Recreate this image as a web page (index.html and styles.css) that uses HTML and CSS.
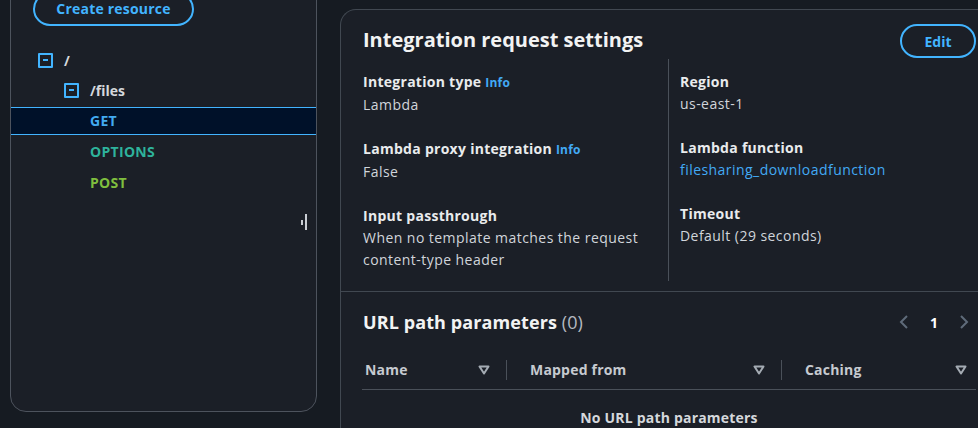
FILE: index.html
```html
<!DOCTYPE html>
<html>
<head>
<meta charset="utf-8">
<link rel="stylesheet" href="styles.css">
</head>
<body>
<div class="layout">
  <aside class="tree-panel">
    <div class="tree-actions">
      <button class="btn btn-pill create">Create resource</button>
    </div>
    <ul class="tree">
      <li class="tree-row lvl0"><span class="toggle"></span><span class="path">/</span></li>
      <li class="tree-row lvl1"><span class="toggle"></span><span class="path">/files</span></li>
      <li class="tree-row lvl2 selected"><span class="method get">GET</span></li>
      <li class="tree-row lvl2"><span class="method options">OPTIONS</span></li>
      <li class="tree-row lvl2"><span class="method post">POST</span></li>
    </ul>
    <div class="resizer"><span class="r-short"></span><span class="r-long"></span></div>
  </aside>

  <main class="detail-panel">
    <header class="panel-header">
      <h2>Integration request settings</h2>
      <button class="btn btn-pill edit">Edit</button>
    </header>
    <div class="kv-grid">
      <div class="kv-col">
        <div class="kv">
          <div class="kv-label">Integration type <a class="info">Info</a></div>
          <div class="kv-value">Lambda</div>
        </div>
        <div class="kv">
          <div class="kv-label">Lambda proxy integration <a class="info">Info</a></div>
          <div class="kv-value">False</div>
        </div>
        <div class="kv">
          <div class="kv-label">Input passthrough</div>
          <div class="kv-value">When no template matches the request content-type header</div>
        </div>
      </div>
      <div class="kv-col divided">
        <div class="kv">
          <div class="kv-label">Region</div>
          <div class="kv-value">us-east-1</div>
        </div>
        <div class="kv">
          <div class="kv-label">Lambda function</div>
          <div class="kv-value"><a class="link">filesharing_downloadfunction</a></div>
        </div>
        <div class="kv">
          <div class="kv-label">Timeout</div>
          <div class="kv-value">Default (29 seconds)</div>
        </div>
      </div>
    </div>

    <section class="params">
      <div class="params-header">
        <h3>URL path parameters <span class="count">(0)</span></h3>
        <nav class="pager">
          <svg class="chev" width="10" height="16" viewBox="0 0 10 16"><path d="M8 2 L2 8 L8 14" fill="none" stroke="currentColor" stroke-width="2"/></svg>
          <span class="page">1</span>
          <svg class="chev" width="10" height="16" viewBox="0 0 10 16"><path d="M2 2 L8 8 L2 14" fill="none" stroke="currentColor" stroke-width="2"/></svg>
        </nav>
      </div>
      <div class="table">
        <div class="thead">
          <div class="th c1"><span>Name</span><svg class="caret" width="12" height="10" viewBox="0 0 12 10"><path d="M1.5 1.5 H10.5 L6 8.5 Z" fill="none" stroke="currentColor" stroke-width="2" stroke-linejoin="round"/></svg></div>
          <div class="th c2"><span>Mapped from</span><svg class="caret" width="12" height="10" viewBox="0 0 12 10"><path d="M1.5 1.5 H10.5 L6 8.5 Z" fill="none" stroke="currentColor" stroke-width="2" stroke-linejoin="round"/></svg></div>
          <div class="th c3"><span>Caching</span><svg class="caret" width="12" height="10" viewBox="0 0 12 10"><path d="M1.5 1.5 H10.5 L6 8.5 Z" fill="none" stroke="currentColor" stroke-width="2" stroke-linejoin="round"/></svg></div>
        </div>
        <div class="empty">No URL path parameters</div>
      </div>
    </section>
  </main>
</div>
</body>
</html>
```
FILE: styles.css
```css
* { box-sizing: border-box; }
html, body {
  margin: 0;
  padding: 0;
  width: 978px;
  height: 428px;
  overflow: hidden;
  background: #161b22;
  font-family: "Open Sans", "Noto Sans", sans-serif;
  font-size: 14px;
  color: #d1d5db;
}
.layout {
  display: flex;
  align-items: flex-start;
  padding-left: 10px;
  gap: 23px;
}
.tree-panel {
  position: relative;
  width: 307px;
  height: 433px;
  margin-top: -21px;
  background: #1b1f27;
  border: 1px solid #4d535d;
  border-radius: 0 0 16px 16px;
  flex-shrink: 0;
}
.tree-actions {
  padding: 12px 0 0 22px;
}
.btn {
  font-family: inherit;
  font-weight: 700;
  font-size: 14px;
  color: #42b4ff;
  background: transparent;
  border: 2px solid #42b4ff;
  cursor: pointer;
}
.btn-pill { border-radius: 20px; }
.create {
  width: 161px;
  height: 34px;
  padding: 0;
  line-height: 28px;
  letter-spacing: 0.2px;
}
.tree {
  list-style: none;
  margin: 19px 0 0;
  padding: 0;
}
.tree-row {
  display: flex;
  align-items: center;
  height: 30px;
  font-weight: 700;
  font-size: 14px;
  color: #d5d8dc;
}
.tree-row:last-child { height: 31px; padding-top: 1px; }
.lvl0 { padding-left: 27px; }
.lvl1 { padding-left: 53px; }
.lvl2 { padding-left: 79px; }
.toggle {
  position: relative;
  width: 15px;
  height: 15px;
  border: 2px solid #42b4ff;
  border-radius: 1px;
  margin-right: 11px;
  flex-shrink: 0;
}
.toggle::after {
  content: "";
  position: absolute;
  left: 3px;
  right: 3px;
  top: 4.5px;
  height: 2px;
  background: #42b4ff;
}
.tree-row.selected {
  height: 28px;
  margin: 2px 0 1px;
  padding-bottom: 1px;
  background: #001129;
  border-top: 1px solid #42b4ff;
  border-bottom: 1px solid #42b4ff;
}
.method { letter-spacing: 0.3px; }
.get { color: #42aaf0; }
.options { color: #2eb39c; }
.post { color: #7fbe3e; }
.resizer {
  position: absolute;
  right: 9px;
  top: 234px;
  display: flex;
  align-items: center;
  gap: 2px;
}
.r-short { width: 2px; height: 5px; background: #c9cdd3; }
.r-long { width: 2px; height: 16px; background: #c9cdd3; }

.detail-panel {
  width: 660px;
  height: 440px;
  margin-top: 9px;
  background: #1b1f27;
  border: 1px solid #414851;
  border-right: none;
  border-bottom: none;
  border-radius: 16px 0 0 0;
  flex-shrink: 0;
}
.panel-header {
  display: flex;
  align-items: center;
  justify-content: space-between;
  padding: 12px 24px 0 22px;
  height: 49px;
}
.panel-header h2 {
  margin: 0 0 1px;
  font-size: 20px;
  font-weight: 700;
  color: #f2f3f3;
  line-height: 32px;
}
.edit {
  width: 76px;
  height: 34px;
  padding: 0;
  margin-top: 1px;
}
.kv-grid {
  display: grid;
  grid-template-columns: 305px 1fr;
  padding: 0 22px;
}
.kv-col {
  padding: 12px 0 10px;
  display: flex;
  flex-direction: column;
  gap: 22px;
}
.kv-col.divided {
  border-left: 1px solid #4a5059;
  padding-left: 11px;
}
.kv-label {
  font-weight: 700;
  color: #e9ebed;
  line-height: 22px;
  letter-spacing: 0.28px;
}
.kv-value {
  line-height: 22px;
  color: #d1d5db;
  letter-spacing: 0.45px;
}
.info {
  color: #42aaf5;
  font-size: 12px;
  font-weight: 700;
  letter-spacing: 0.2px;
}
.link { color: #42aaf5; }
.kv-col:first-child .kv:last-child .kv-value { width: 290px; }

.params {
  margin-top: 10px;
  border-top: 1px solid #414851;
  padding: 0 22px;
}
.params-header {
  display: flex;
  align-items: center;
  justify-content: space-between;
  height: 60px;
}
.params-header h3 {
  margin: 0;
  font-size: 18px;
  font-weight: 700;
  color: #f2f3f3;
  letter-spacing: 0.1px;
}
.count { font-weight: 400; color: #b4b9c0; }
.pager {
  display: flex;
  align-items: center;
  gap: 20px;
  color: #5f6b7a;
  margin-right: 9px;
}
.page { font-weight: 700; color: #ffffff; width: 10px; text-align: center; }
.table {
  margin-left: -1px;
  width: 614px;
}
.thead {
  display: flex;
  height: 38px;
  padding-bottom: 2px;
  align-items: center;
  border-bottom: 1px solid #4a5059;
}
.th {
  display: flex;
  align-items: center;
  justify-content: space-between;
  font-weight: 700;
  color: #c6cad0;
  height: 20px;
  letter-spacing: 0.2px;
}
.th .caret { color: #a4abb3; margin-top: 1px; }
.c1 { width: 144px; padding: 0 16px 0 3px; }
.c2 { width: 275px; padding: 0 16px 0 23px; border-left: 1px solid #4a5059; }
.c3 { flex: 1; padding: 0 9px 0 23px; border-left: 1px solid #4a5059; }
.empty {
  text-align: center;
  font-weight: 700;
  color: #d5d8dc;
  padding-top: 18px;
  letter-spacing: 0.2px;
}
```
